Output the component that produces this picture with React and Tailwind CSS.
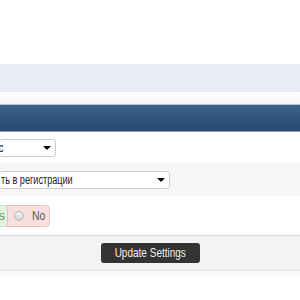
import React from 'react';

const NARROW = { fontFamily: '"Liberation Sans Narrow", "Arial Narrow", "Liberation Sans", Arial, sans-serif' };

function Caret() {
  return (
    <span className="absolute right-[4px] top-[6px] w-0 h-0 border-l-[4px] border-r-[4px] border-t-[4px] border-l-transparent border-r-transparent border-t-black" />
  );
}

export default function App() {
  return (
    <div className="w-[300px] h-[300px] bg-white overflow-hidden" style={NARROW}>
      <div className="h-[64px] bg-white" />
      <div className="h-[28px] bg-[#e9ecf2]" />
      <div className="h-[13px] bg-gradient-to-b from-white to-[#f3f5f7] border-b border-[#b7c4d3]" />
      <div className="h-[27px] bg-gradient-to-b from-[#3d628b] to-[#284a72] border-b border-[#8d9cb0]" />

      {/* settings rows, label column scrolled off to the left */}
      <div className="h-[31px] flex items-center pt-[1px]">
        <div className="relative h-[18px] w-[57px] ml-[-1px] bg-white border border-[#cdcdcd] rounded-[3px] text-[12px] text-[#222] leading-[16px] overflow-hidden whitespace-nowrap">
          <span className="absolute right-[52px] top-0 inline-block origin-right scale-x-[0.83]">Русский язык-ис</span>
          <Caret />
        </div>
      </div>
      <div className="h-[33px] flex items-center bg-[#f4f6f8]">
        <div className="relative h-[18px] w-[171px] ml-[-1px] bg-white border border-[#cdcdcd] rounded-[3px] text-[12px] text-[#222] leading-[16px] overflow-hidden whitespace-nowrap">
          <span className="absolute left-[1px] top-0 inline-block origin-left scale-x-[0.76]">ть в регистрации</span>
          <Caret />
        </div>
      </div>
      <div className="h-[40px] flex items-center border-b border-[#dcdcdc]">
        <div className="flex h-[22px] text-[13px] leading-[20px]">
          <div className="w-[7px] bg-[#e3f1de] border border-l-0 border-r-0 border-[#c6dfbf] overflow-hidden relative">
            <span className="absolute right-[2px] text-[#6f9a62]">s</span>
          </div>
          <div className="w-[43px] flex items-center gap-[8px] pl-[6px] bg-[#f8e0e0] border border-[#e8c3c3] rounded-r-[4px]">
            <span className="w-[10px] h-[10px] rounded-full border border-[#b5b5b5] bg-gradient-to-b from-[#f5f5f5] to-[#d2d2d2]" />
            <span className="inline-block origin-left scale-x-[0.8] text-[#555]">No</span>
          </div>
        </div>
      </div>
      <div className="h-[35px] flex items-center justify-center bg-[#f3f3f3] border-b border-[#dbe3ec]">
        <button className="h-[20px] w-[99px] bg-[#333333] rounded-[3px] text-[13px] text-[#eeeeee] leading-[20px] whitespace-nowrap">
          <span className="inline-block scale-x-[0.77]">Update Settings</span>
        </button>
      </div>
      <div className="h-[10px] bg-gradient-to-b from-[#f4f6f8] to-white" />
    </div>
  );
}
